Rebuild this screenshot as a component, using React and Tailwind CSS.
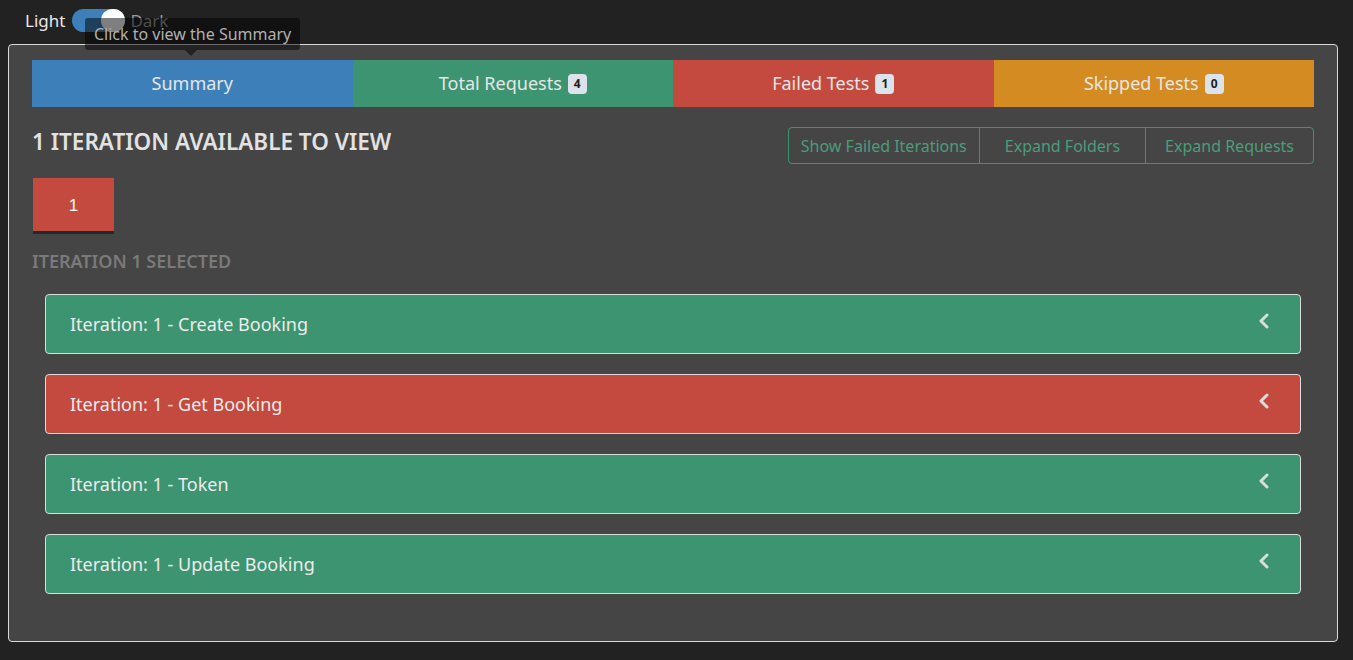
import React, { useState } from 'react';

const tabs = [
  { label: 'Summary', bg: 'bg-[#3d80b9]' },
  { label: 'Total Requests', count: 4, bg: 'bg-[#3d9471]' },
  { label: 'Failed Tests', count: 1, bg: 'bg-[#c44a3f]' },
  { label: 'Skipped Tests', count: 0, bg: 'bg-[#d48b22]' },
];

const iterations = [
  { name: 'Create Booking', failed: false },
  { name: 'Get Booking', failed: true },
  { name: 'Token', failed: false },
  { name: 'Update Booking', failed: false },
];

function Chevron() {
  return (
    <svg width="12" height="16" viewBox="0 0 12 16" className="text-[#dcdcdc]">
      <path d="M9 2 L3 8 L9 14" fill="none" stroke="currentColor" strokeWidth="3" strokeLinecap="round" strokeLinejoin="round" />
    </svg>
  );
}

export default function App() {
  const [dark, setDark] = useState(true);

  return (
    <div className="min-h-[660px] bg-[#222222] pl-2 pr-[15px] pb-[18px] font-['Noto_Sans',sans-serif] text-[#dcdcdc]">
      {/* theme toggle */}
      <div className="relative flex h-[44px] items-center pl-[17px] pb-[3px] text-[17px]">
        <span className="text-[#e8e8e8]">Light</span>
        <button
          onClick={() => setDark(!dark)}
          className="relative ml-[7px] mr-[5px] h-[23px] w-[53px] rounded-full bg-[#3d80b9]"
        >
          <span className="absolute right-0 top-0 h-[23px] w-[24px] rounded-full bg-white" />
        </button>
        <span className="text-[#9a9a9a]">Dark</span>

        {/* tooltip */}
        <div className="absolute left-[77px] top-[18px] z-10 rounded-[3px] bg-black/50 px-[9px] py-[4px] text-[16px] leading-[24px] text-[#b0b0b0]">
          Click to view the Summary
          <span className="absolute left-[100px] top-full h-0 w-0 border-x-[6px] border-t-[6px] border-x-transparent border-t-black/50" />
        </div>
      </div>

      {/* main card */}
      <div className="rounded-[4px] border border-[#d8d8d8] bg-[#454545] px-[23px] pt-[15px] pb-[47px]">
        <div className="grid grid-cols-4">
          {tabs.map((t) => (
            <div key={t.label} className={`${t.bg} flex h-[47px] items-center justify-center gap-[6px] text-[18px] text-[#e6e6e6]`}>
              {t.label}
              {t.count !== undefined && (
                <span className="rounded-[4px] bg-[#dde3ea] px-[6px] text-[12px] font-bold leading-[20px] text-[#222]">
                  {t.count}
                </span>
              )}
            </div>
          ))}
        </div>

        <div className="mt-[20px] flex items-start justify-between">
          <h2 className="pt-[1px] text-[22.5px] font-semibold leading-[28px] text-[#e2e2e2]">1 ITERATION AVAILABLE TO VIEW</h2>
          <div className="flex h-[37px] rounded-[4px] border border-[#3d9471] text-[16px] text-[#4c9c7c]">
            <button className="px-[12px]">Show Failed Iterations</button>
            <button className="border-l border-[#3d9471] px-[25px]">Expand Folders</button>
            <button className="border-l border-[#3d9471] px-[19px]">Expand Requests</button>
          </div>
        </div>

        <div className="mt-[14px] pl-px">
          <button className="h-[56px] w-[81px] border-b-[3px] border-[#1d2a2e] bg-[#c44a3f] pt-[3px] font-['Liberation_Sans',sans-serif] text-[17px] text-white">
            1
          </button>
        </div>

        <div className="mt-[15px] text-[18px] font-semibold leading-[24px] text-[#7a7a7a]">ITERATION 1 SELECTED</div>

        <div className="mt-[21px] flex flex-col gap-[20px] px-[13px]">
          {iterations.map((it) => (
            <div
              key={it.name}
              className={`${it.failed ? 'bg-[#c44a3f]' : 'bg-[#3d9471]'} flex h-[60px] items-center justify-between rounded-[4px] border border-[#dcdcdc] pl-[24px] pr-[30px] text-[18px] text-[#ececec]`}
            >
              <span>Iteration: 1 - {it.name}</span>
              <span className="-mt-[6px]"><Chevron /></span>
            </div>
          ))}
        </div>
      </div>
    </div>
  );
}
